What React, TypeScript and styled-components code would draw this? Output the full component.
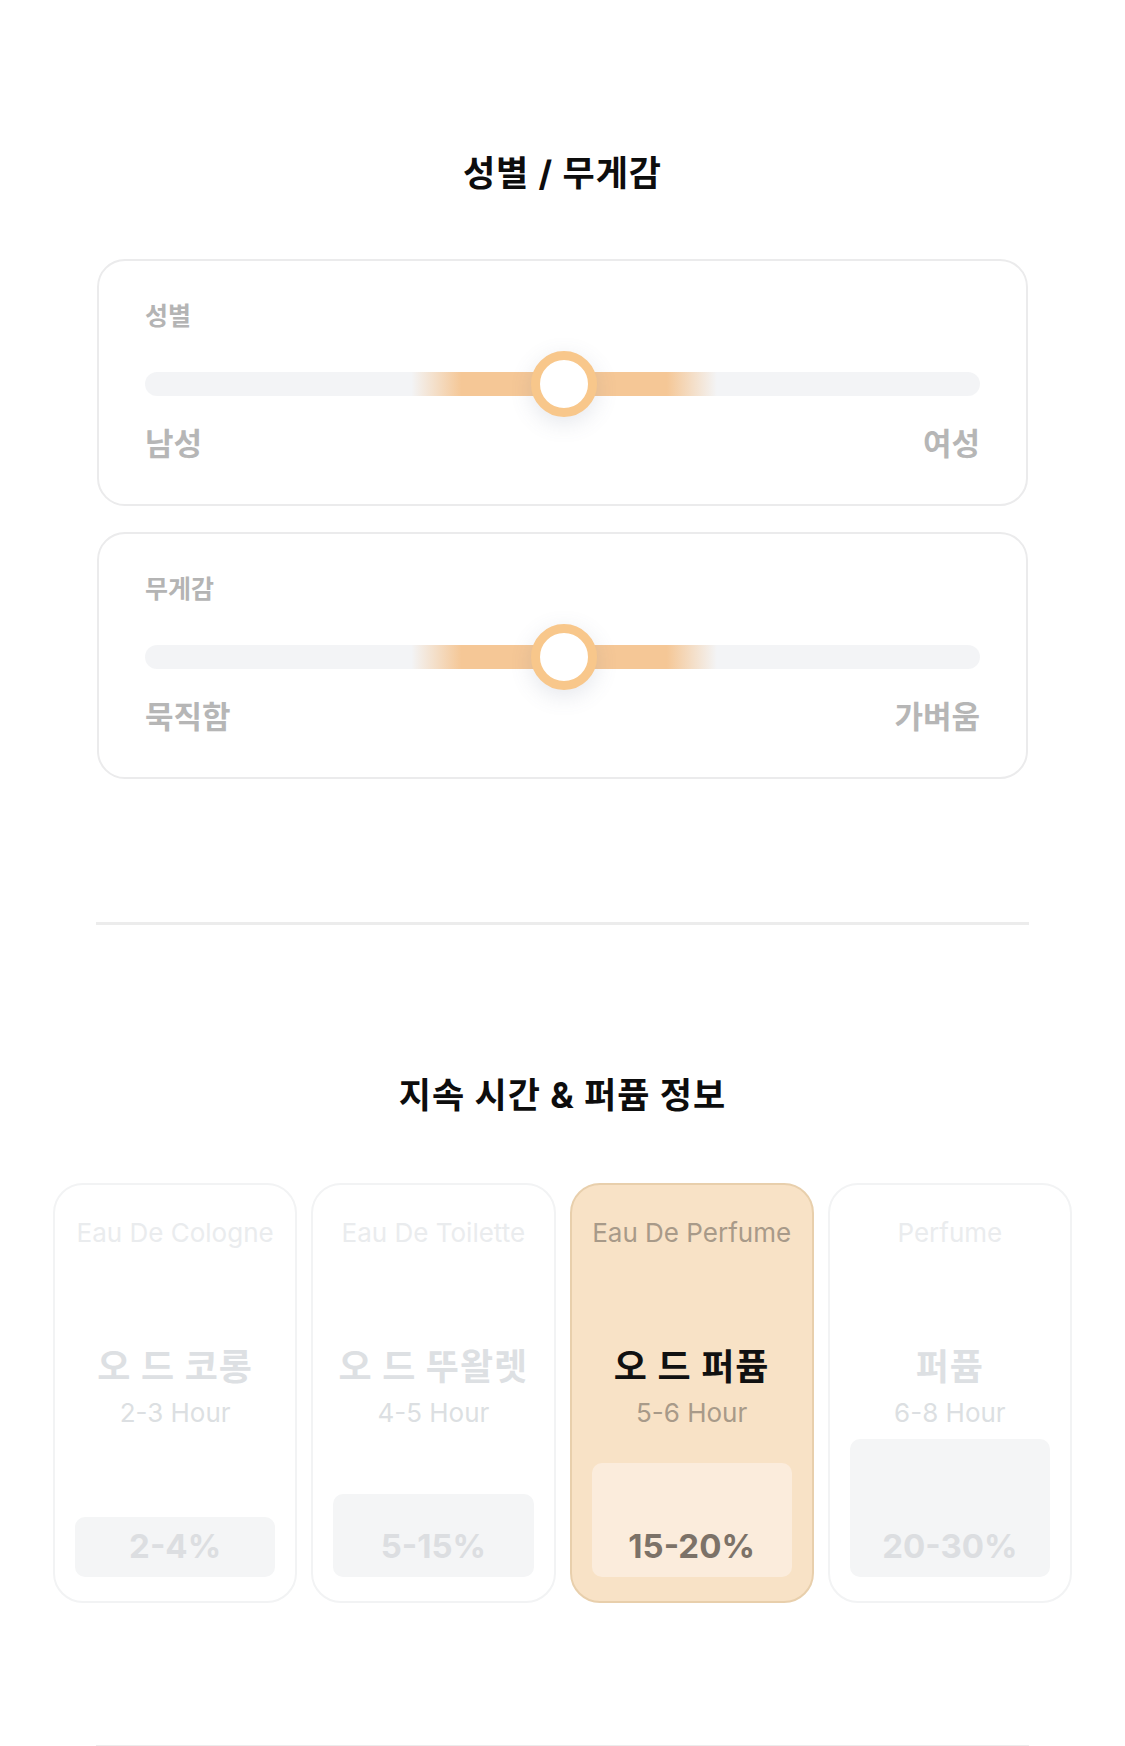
import React from "react"
import styled, { createGlobalStyle } from "styled-components"

const GlobalStyle = createGlobalStyle`
  html,
  body {
    margin: 0;
    padding: 0;
    background: #fff;
  }

  body {
    font-family: Inter, "Noto Sans CJK KR", sans-serif;
    -webkit-font-smoothing: antialiased;
  }

  * {
    box-sizing: border-box;
  }
`

type SliderData = {
  label: string
  left: string
  right: string
  value: number
}

type PerfumeData = {
  en: string
  ko: string
  hours: string
  ratio: string
  barHeight: number
  active?: boolean
}

const sliders: SliderData[] = [
  { label: "성별", left: "남성", right: "여성", value: 50.2 },
  { label: "무게감", left: "묵직함", right: "가벼움", value: 50.2 },
]

const perfumes: PerfumeData[] = [
  { en: "Eau De Cologne", ko: "오 드 코롱", hours: "2-3 Hour", ratio: "2-4%", barHeight: 60 },
  { en: "Eau De Toilette", ko: "오 드 뚜왈렛", hours: "4-5 Hour", ratio: "5-15%", barHeight: 83 },
  { en: "Eau De Perfume", ko: "오 드 퍼퓸", hours: "5-6 Hour", ratio: "15-20%", barHeight: 114, active: true },
  { en: "Perfume", ko: "퍼퓸", hours: "6-8 Hour", ratio: "20-30%", barHeight: 138 },
]

const Page = styled.main`
  width: 1125px;
  padding-bottom: 1px;
`

const Section = styled.section<{ $top: number; $side: number }>`
  padding: ${(p) => p.$top}px ${(p) => p.$side}px 0;
`

const Title = styled.h2`
  margin: 0;
  font-size: 35px;
  line-height: 40px;
  font-weight: 700;
  color: #0d0d0d;
  text-align: center;
  letter-spacing: 1px;
`

const Rule = styled.hr<{ $top: number }>`
  margin: ${(p) => p.$top}px 96px 0;
  border: none;
  height: 3px;
  background: #ececec;
`

/* gender / weight sliders */

const SliderList = styled.div`
  margin-top: 66px;
  display: flex;
  flex-direction: column;
  gap: 26px;
`

const SliderCard = styled.div`
  border: 2px solid #ebebec;
  border-radius: 28px;
  padding: 40px 46px 42px;
  background: #fff;
`

const SliderLabel = styled.div`
  font-size: 25px;
  line-height: 30px;
  font-weight: 700;
  color: #b4b4b4;
`

const SliderRow = styled.div`
  position: relative;
  margin-top: 20px;
  height: 66px;
  display: flex;
  align-items: center;
`

const Track = styled.div<{ $value: number }>`
  width: 100%;
  height: 24px;
  border-radius: 12px;
  background: linear-gradient(
    90deg,
    #f3f4f6 ${(p) => p.$value - 18.3}%,
    #f5c796 ${(p) => p.$value - 12.3}%,
    #f5c796 ${(p) => p.$value + 12.3}%,
    #f3f4f6 ${(p) => p.$value + 18.3}%
  );
`

const Thumb = styled.div`
  position: absolute;
  top: 50%;
  width: 66px;
  height: 66px;
  border-radius: 50%;
  border: 9px solid #f8c78b;
  background: #fff;
  transform: translate(-50%, -50%);
  box-shadow: 0 6px 22px rgba(95, 105, 135, 0.16);
`

const SliderEnds = styled.div`
  margin-top: 9px;
  display: flex;
  justify-content: space-between;
  font-size: 31px;
  line-height: 36px;
  font-weight: 700;
  color: #b6b6b6;
`

/* concentration cards */

const CardGrid = styled.div`
  margin-top: 68px;
  display: grid;
  grid-template-columns: repeat(4, 1fr);
  gap: 14px;
`

const PerfumeCard = styled.div<{ $active?: boolean }>`
  height: 420px;
  display: flex;
  flex-direction: column;
  align-items: center;
  padding: 33px 20px 24px;
  border-radius: 30px;
  border: 2px solid ${(p) => (p.$active ? "#e8cfac" : "#f2f3f4")};
  background: ${(p) => (p.$active ? "#f8e2c6" : "#fff")};
`

const EnName = styled.div<{ $active?: boolean }>`
  font-size: 26px;
  line-height: 30px;
  color: ${(p) => (p.$active ? "#a89a89" : "#eaecee")};
  white-space: nowrap;
`

const KoName = styled.div<{ $active?: boolean }>`
  margin-top: 98px;
  font-size: 36px;
  line-height: 42px;
  font-weight: 700;
  letter-spacing: 1px;
  color: ${(p) => (p.$active ? "#111" : "#dde0e3")};
  white-space: nowrap;
`

const Hours = styled.div<{ $active?: boolean }>`
  margin-top: 10px;
  font-size: 26px;
  line-height: 30px;
  color: ${(p) => (p.$active ? "#a89a89" : "#dcdfe2")};
`

const RatioBar = styled.div<{ $active?: boolean; $height: number }>`
  margin-top: auto;
  align-self: stretch;
  height: ${(p) => p.$height}px;
  border-radius: 10px;
  display: flex;
  align-items: flex-end;
  justify-content: center;
  padding-bottom: 12px;
  background: ${(p) => (p.$active ? "#fbecdc" : "#f4f5f6")};
  color: ${(p) => (p.$active ? "#7c7268" : "#dcdee1")};
  font-size: 33px;
  line-height: 38px;
  font-weight: 700;
`

function Slider({ label, left, right, value }: SliderData) {
  return (
    <SliderCard>
      <SliderLabel>{label}</SliderLabel>
      <SliderRow>
        <Track $value={value} />
        <Thumb style={{ left: `${value}%` }} />
      </SliderRow>
      <SliderEnds>
        <span>{left}</span>
        <span>{right}</span>
      </SliderEnds>
    </SliderCard>
  )
}

function Perfume({ en, ko, hours, ratio, barHeight, active }: PerfumeData) {
  return (
    <PerfumeCard $active={active}>
      <EnName $active={active}>{en}</EnName>
      <KoName $active={active}>{ko}</KoName>
      <Hours $active={active}>{hours}</Hours>
      <RatioBar $active={active} $height={barHeight}>
        {ratio}
      </RatioBar>
    </PerfumeCard>
  )
}

export default function App() {
  return (
    <>
      <GlobalStyle />
      <Page>
        <Section $top={153} $side={97}>
          <Title>성별 / 무게감</Title>
          <SliderList>
            {sliders.map((s) => (
              <Slider key={s.label} {...s} />
            ))}
          </SliderList>
        </Section>
        <Rule $top={143} />
        <Section $top={150} $side={53}>
          <Title>지속 시간 &amp; 퍼퓸 정보</Title>
          <CardGrid>
            {perfumes.map((p) => (
              <Perfume key={p.en} {...p} />
            ))}
          </CardGrid>
        </Section>
        <Rule $top={142} />
      </Page>
    </>
  )
}
